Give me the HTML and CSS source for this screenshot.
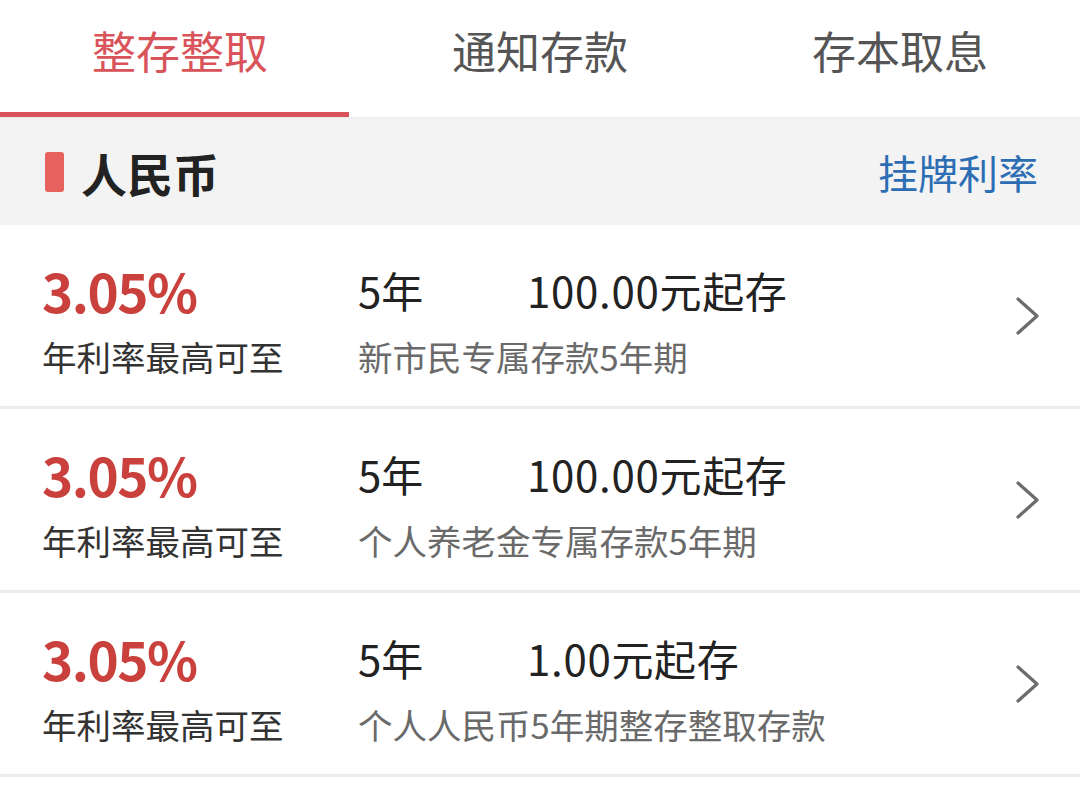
FILE: index.html
```html
<!DOCTYPE html>
<html lang="zh-CN">
<head>
<meta charset="utf-8">
<link rel="stylesheet" href="styles.css">
</head>
<body>
<div class="tabs">
  <div class="tab active">整存整取</div>
  <div class="tab">通知存款</div>
  <div class="tab">存本取息</div>
</div>
<div class="section">
  <div class="section-title"><span class="mark"></span>人民币</div>
  <div class="section-link">挂牌利率</div>
</div>
<div class="list">
  <div class="row">
    <div class="rate">
      <div class="pct">3.05%</div>
      <div class="label">年利率最高可至</div>
    </div>
    <div class="info">
      <div class="line1"><span class="term">5年</span><span class="amount">100.00元起存</span></div>
      <div class="desc">新市民专属存款5年期</div>
    </div>
    <svg class="chev" viewBox="0 0 26 40" width="26" height="40"><path d="M3 3 L22 20 L3 37" fill="none" stroke="#6b6b6b" stroke-width="3.2" stroke-linecap="round" stroke-linejoin="round"/></svg>
  </div>
  <div class="row">
    <div class="rate">
      <div class="pct">3.05%</div>
      <div class="label">年利率最高可至</div>
    </div>
    <div class="info">
      <div class="line1"><span class="term">5年</span><span class="amount">100.00元起存</span></div>
      <div class="desc">个人养老金专属存款5年期</div>
    </div>
    <svg class="chev" viewBox="0 0 26 40" width="26" height="40"><path d="M3 3 L22 20 L3 37" fill="none" stroke="#6b6b6b" stroke-width="3.2" stroke-linecap="round" stroke-linejoin="round"/></svg>
  </div>
  <div class="row">
    <div class="rate">
      <div class="pct">3.05%</div>
      <div class="label">年利率最高可至</div>
    </div>
    <div class="info">
      <div class="line1"><span class="term">5年</span><span class="amount">1.00元起存</span></div>
      <div class="desc">个人人民币5年期整存整取存款</div>
    </div>
    <svg class="chev" viewBox="0 0 26 40" width="26" height="40"><path d="M3 3 L22 20 L3 37" fill="none" stroke="#6b6b6b" stroke-width="3.2" stroke-linecap="round" stroke-linejoin="round"/></svg>
  </div>
</div>
</body>
</html>
```

FILE: styles.css
```css
html, body {
  margin: 0;
  padding: 0;
  background: #ffffff;
  font-family: "Noto Sans CJK SC", "Noto Sans", sans-serif;
  width: 1080px;
  height: 803px;
  overflow: hidden;
}
.tabs {
  display: grid;
  grid-template-columns: 360px 360px 360px;
  height: 118px;
  border-bottom: 1px solid #ececec;
  box-sizing: border-box;
}
.tab {
  position: relative;
  display: flex;
  justify-content: center;
  align-items: center;
  padding-bottom: 18px;
  font-size: 44px;
  color: #555555;
}
.tab.active {
  color: #d9545a;
}
.tab.active::after {
  content: "";
  position: absolute;
  left: 0;
  width: 349px;
  bottom: 0;
  height: 5px;
  background: #d9545a;
}
.section {
  background: #f3f3f3;
  height: 107px;
  display: flex;
  align-items: center;
  justify-content: space-between;
  padding: 0 42px 0 45px;
}
.section-title {
  display: flex;
  align-items: center;
  font-size: 46px;
  font-weight: 700;
  color: #222222;
}
.mark {
  width: 19px;
  height: 40px;
  border-radius: 3px;
  background: #e8625d;
  margin-right: 17px;
}
.section-link {
  font-size: 40px;
  color: #2c6db3;
}
.row {
  display: flex;
  align-items: center;
  height: 184px;
  box-sizing: border-box;
  border-bottom: 3px solid #ececec;
  padding: 0 39px 0 42px;
}
.rate, .info {
  padding-top: 7px;
}
.rate {
  width: 316px;
}
.pct {
  font-size: 53px;
  font-weight: 700;
  color: #c9403c;
  line-height: 64px;
  letter-spacing: -1.5px;
}
.label {
  font-size: 34.5px;
  color: #333333;
  line-height: 50px;
  margin-top: 9px;
}
.info {
  flex: 1;
}
.line1 {
  display: flex;
  font-size: 42px;
  color: #222222;
  line-height: 64px;
}
.term {
  width: 169px;
}
.amount {
  letter-spacing: 0.7px;
}
.desc {
  font-size: 34.5px;
  color: #6a6a6a;
  line-height: 50px;
  margin-top: 9px;
}
.chev {
  display: block;
}
```
